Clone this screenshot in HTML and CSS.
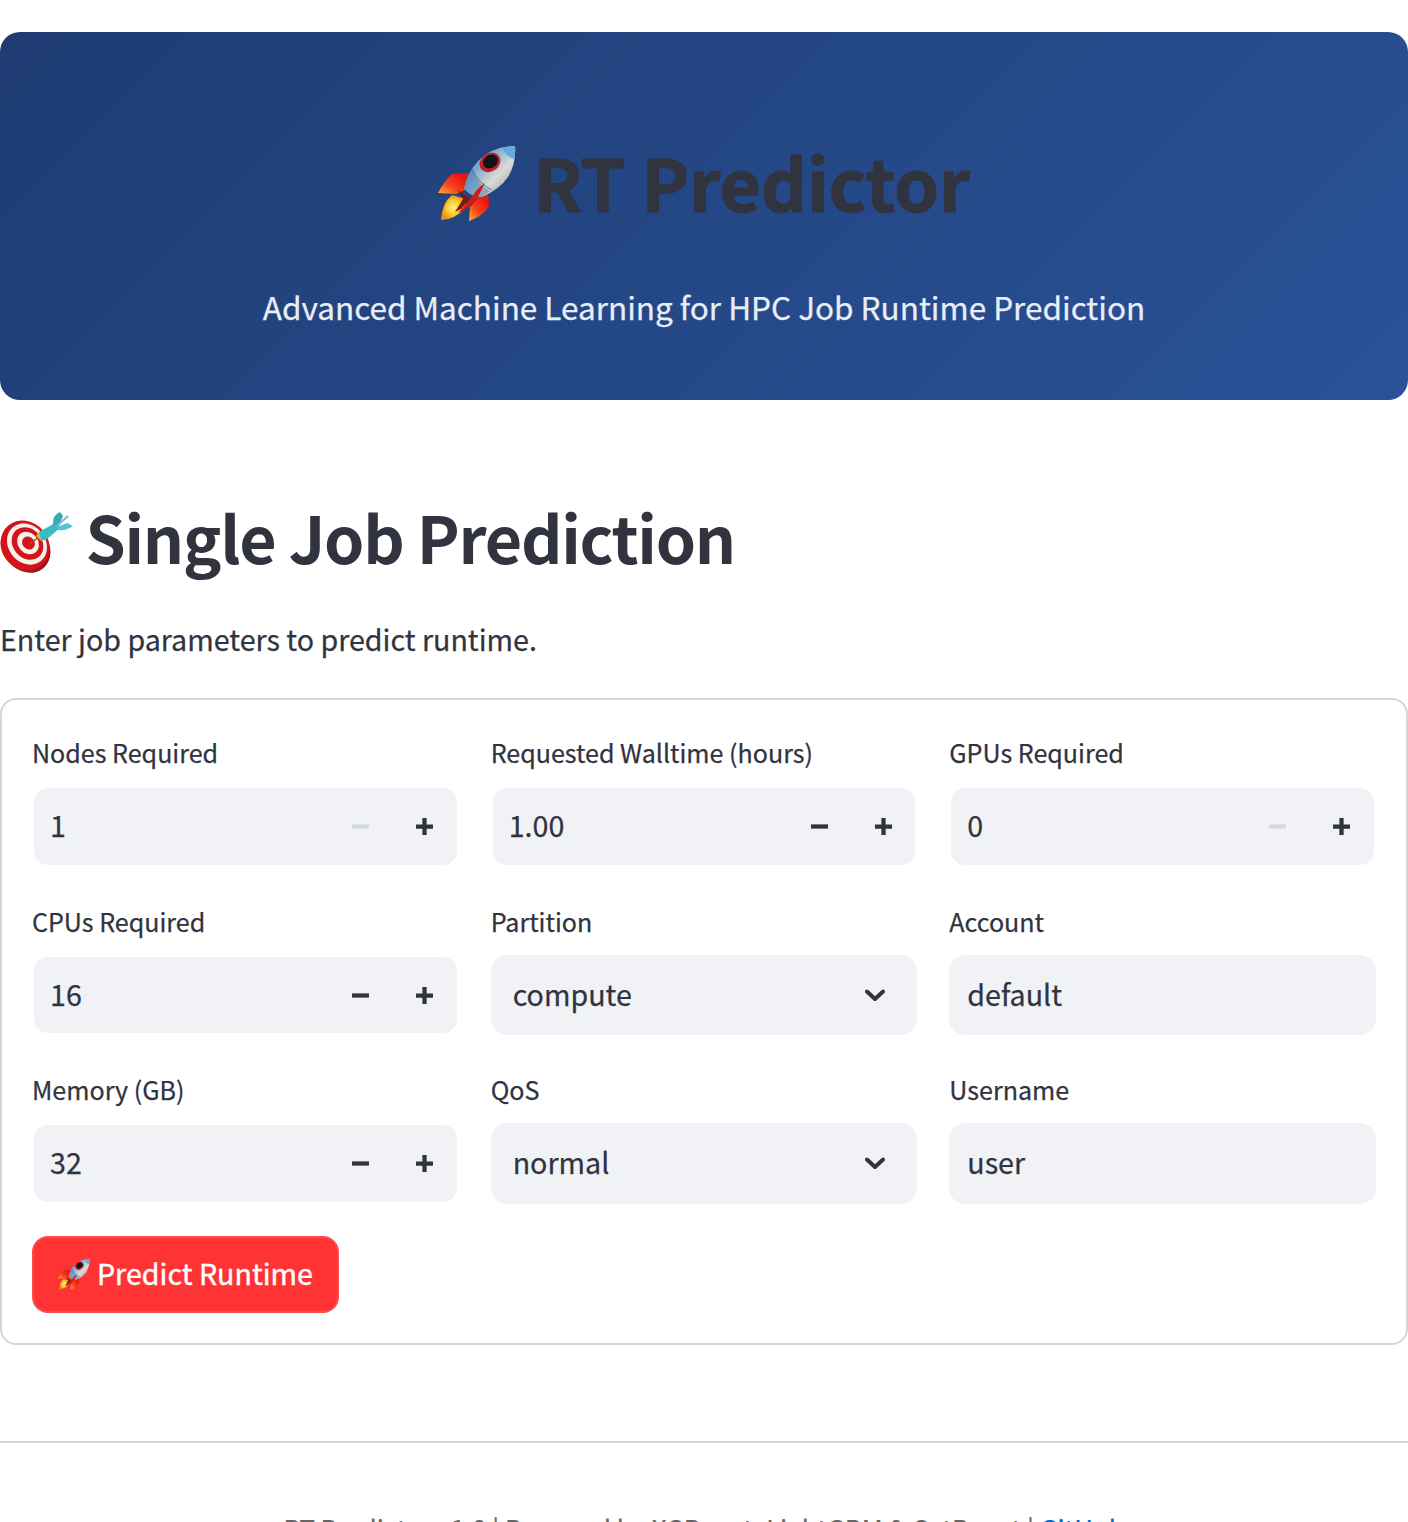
FILE: index.html
```html
<!DOCTYPE html>
<html lang="en">
<head>
<meta charset="utf-8">
<title>RT Predictor</title>
<link rel="stylesheet" href="styles.css">
</head>
<body>
<svg class="defs" aria-hidden="true">
  <defs>
    <linearGradient id="hull" x1="0" y1="0" x2="1" y2="1">
      <stop offset="0.2" stop-color="#4d8fc6"/><stop offset="0.48" stop-color="#a9c4d2"/><stop offset="0.62" stop-color="#d9dcd4"/><stop offset="1" stop-color="#7d8c8e"/>
    </linearGradient>
    <linearGradient id="fin" x1="1" y1="0" x2="0" y2="1">
      <stop offset="0.2" stop-color="#e8160e"/><stop offset="0.6" stop-color="#f4431a"/><stop offset="1" stop-color="#ffb52e"/>
    </linearGradient>
    <radialGradient id="flame">
      <stop offset="0" stop-color="#fff27a"/><stop offset="0.6" stop-color="#fbc62d"/><stop offset="1" stop-color="#e8901a"/>
    </radialGradient>
    <symbol id="rocket" viewBox="0 0 78 76">
      <path fill="url(#fin)" d="M31 27 14 28Q6 35 0 47L18 48 27 44Z"/>
      <path fill="url(#fin)" d="M50 48 51 61Q45 70 31 75L32 61 41 51Z"/>
      <path fill="url(#flame)" d="M14 49Q4 57 3 74Q17 74 27 62L28 53Z"/>
      <path fill="#7a1c12" d="M20 44 32 52 23 63 17 66 25 53Z"/>
      <path fill="url(#hull)" d="M77 0Q54 0 40 15Q29 27 26 43Q34 51 44 51Q62 43 70 31Q78 18 77 0Z"/>
      <path fill="#3d79b5" opacity=".5" d="M34 23Q28 32 26 43Q34 51 44 51L52 45Q39 37 34 23Z"/>
      <path fill="#63abd8" d="M77 0Q70 0 64 2Q68 11 76 13Q78 7 77 0Z"/>
      <path fill="none" stroke="#5d7583" d="M34 23Q41 38 54 44"/>
      <ellipse cx="52" cy="16.500" rx="11" ry="9" transform="rotate(-35 52 16.500)" fill="#c51d2b"/>
      <ellipse cx="52.500" cy="15.500" rx="8" ry="6.500" transform="rotate(-35 52.500 15.500)" fill="#101418"/>
      <path fill="#d51b12" d="M47 37Q38 43 34 51L20 67Q31 63 40 51Z"/>
    </symbol>
    <symbol id="dart" viewBox="0 0 73 62">
      <ellipse cx="26" cy="35.500" rx="22.500" ry="27" transform="rotate(-40 26 35.500)" fill="#9f1218"/>
      <ellipse cx="25" cy="33.500" rx="23.500" ry="26" transform="rotate(-40 25 33.500)" fill="#d3141c"/>
      <ellipse cx="27" cy="32" rx="18.500" ry="22" transform="rotate(-40 27 32)" fill="#f6f1e8"/>
      <ellipse cx="27.500" cy="31.500" rx="14.500" ry="17.500" transform="rotate(-40 27.500 31.500)" fill="#d3141c"/>
      <ellipse cx="28" cy="31" rx="10" ry="12" transform="rotate(-40 28 31)" fill="#f6f1e8"/>
      <ellipse cx="28.500" cy="31" rx="6" ry="7" transform="rotate(-40 28.500 31)" fill="#d3141c"/>
      <path stroke="#8c5a20" stroke-width="1.500" d="M30 32 40 24"/>
      <path fill="#e7b52c" d="M36 24 41 29 45 25 39 20Z"/>
      <path fill="#35bcc8" d="M39 20 55 11 61 15 46 28 41 28Z"/>
      <path fill="#35adb8" d="M53 13Q52 3 60 0L63 4 59 14Z"/>
      <path fill="#4cc9d4" d="M57 15 67 11 73 14Q67 19 58 18Z"/>
      <path stroke="#7fb9c8" stroke-width="2" d="M57 14 68 4"/>
    </symbol>
    <symbol id="minus" viewBox="0 0 16 16"><path d="M0 6H16V10H0Z"/></symbol>
    <symbol id="plus" viewBox="0 0 16 16"><path d="M6 0H10V6H16V10H10V16H6V10H0V6H6Z"/></symbol>
    <symbol id="chevron" viewBox="0 0 20 13"><path fill="none" stroke="currentColor" stroke-width="4" stroke-linecap="round" stroke-linejoin="round" d="M2 2.500 10 10 18 2.500"/></symbol>
  </defs>
</svg>

<header class="hero">
  <h1 class="hero-title"><svg class="hero-icon"><use href="#rocket"/></svg><span>RT Predictor</span></h1>
  <p class="hero-text">Advanced Machine Learning for HPC Job Runtime Prediction</p>
</header>

<main>
  <h2 class="section-title"><svg class="section-icon"><use href="#dart"/></svg><span>Single Job Prediction</span></h2>
  <p class="intro">Enter job parameters to predict runtime.</p>

  <form class="panel">
    <div class="grid">
      <div class="field"><label class="label">Nodes Required</label><div class="box number"><span class="value">1</span><svg class="step off"><use href="#minus"/></svg><svg class="step"><use href="#plus"/></svg></div></div>
      <div class="field"><label class="label">Requested Walltime (hours)</label><div class="box number"><span class="value">1.00</span><svg class="step"><use href="#minus"/></svg><svg class="step"><use href="#plus"/></svg></div></div>
      <div class="field"><label class="label">GPUs Required</label><div class="box number"><span class="value">0</span><svg class="step off"><use href="#minus"/></svg><svg class="step"><use href="#plus"/></svg></div></div>
      <div class="field"><label class="label">CPUs Required</label><div class="box number"><span class="value">16</span><svg class="step"><use href="#minus"/></svg><svg class="step"><use href="#plus"/></svg></div></div>
      <div class="field"><label class="label">Partition</label><div class="box select"><span class="value">compute</span><svg class="chevron"><use href="#chevron"/></svg></div></div>
      <div class="field"><label class="label">Account</label><div class="box"><span class="value">default</span></div></div>
      <div class="field"><label class="label">Memory (GB)</label><div class="box number"><span class="value">32</span><svg class="step"><use href="#minus"/></svg><svg class="step"><use href="#plus"/></svg></div></div>
      <div class="field"><label class="label">QoS</label><div class="box select"><span class="value">normal</span><svg class="chevron"><use href="#chevron"/></svg></div></div>
      <div class="field"><label class="label">Username</label><div class="box"><span class="value">user</span></div></div>
    </div>
    <button class="submit" type="button"><svg class="submit-icon"><use href="#rocket"/></svg><span class="submit-text">Predict Runtime</span></button>
  </form>
</main>

<footer class="footer">RT Predictor v1.0 | Powered by XGBoost, LightGBM &amp; CatBoost | <a class="link" href="#">GitHub</a></footer>
</body>
</html>
```
FILE: styles.css
```css
* { box-sizing: border-box; }
body {
  margin: 0;
  height: 1522px;
  padding-top: 32px;
  overflow: hidden;
  background: #fff;
  color: #31333f;
  font-family: "Noto Sans CJK SC", "Noto Sans", sans-serif;
  font-size: 28.640px;
  -webkit-text-stroke: 0.250px currentColor;
}
h1, h2, p { margin: 0; }
.defs { position: absolute; width: 0; height: 0; }
.hero {
  height: 368px;
  padding: 104px 64px 0;
  border-radius: 20px;
  background: linear-gradient(135deg, #1e3c72 0%, #2a5298 100%);
}
.hero-title {
  display: flex;
  justify-content: center;
  align-items: center;
  gap: 17px;
  height: 96px;
  font-size: 72px;
  font-weight: 700;
  letter-spacing: -0.300px;
  line-height: 90px;
  -webkit-text-stroke: 1px currentColor;
}
.hero-title span { padding-bottom: 6px; }
.hero-icon { width: 78px; height: 76px; }
.hero-text {
  margin-top: 48px;
  color: #e8edf7;
  font-size: 31.500px;
  line-height: 52px;
  text-align: center;
}
.section-title {
  display: flex;
  align-items: center;
  gap: 12.500px;
  margin-top: 96px;
  height: 88px;
  font-size: 64.500px;
  font-weight: 700;
  letter-spacing: -1.270px;
  line-height: 80px;
  -webkit-text-stroke: 0;
}
.section-title span { padding-bottom: 8px; }
.section-icon { width: 73px; height: 62px; margin-top: 5px; }
.intro { margin-top: 31px; line-height: 48px; }
.panel {
  height: 647px;
  margin-top: 35px;
  padding: 30px;
  border: 2px solid #d6d6d9;
  border-radius: 16px;
}
.grid {
  display: grid;
  grid-template-columns: repeat(3, 1fr);
  column-gap: 32px;
  row-gap: 32px;
}
.field { height: 136.700px; }
.label {
  display: block;
  height: 56px;
  font-size: 25.070px;
  line-height: 44.400px;
}
.box {
  display: flex;
  align-items: center;
  height: 80.700px;
  padding: 0 18px;
  border-radius: 16px;
  background: #f0f2f6;
}
.value { flex: 1; line-height: 46px; padding-bottom: 2.500px; }
.number {
  gap: 47px;
  padding: 0 23.500px 0 16px;
  border: 2px solid transparent;
  background-clip: padding-box;
}
.select { padding: 0 32px 0 22px; }
.step { width: 17px; height: 17px; fill: #31333f; }
.off { fill: #d5d9df; }
.chevron { width: 20px; height: 13px; }
.submit {
  display: flex;
  align-items: center;
  gap: 7px;
  height: 77px;
  margin-top: 32px;
  padding: 0 24px;
  border: 2px solid #ff4b4b;
  border-radius: 16px;
  background: #ff3333;
  color: #fff;
  font: inherit;
  line-height: 44px;
}
.submit-text { padding-bottom: 4px; -webkit-text-stroke: 0.400px currentColor; }
.submit-icon { width: 32px; height: 31px; }
.footer {
  margin-top: 96px;
  padding-top: 61px;
  border-top: 2px solid #d6d6d9;
  color: #666;
  font-size: 25.750px;
  line-height: 48px;
  text-align: center;
}
.link { color: #0068c9; text-decoration: none; }
```
